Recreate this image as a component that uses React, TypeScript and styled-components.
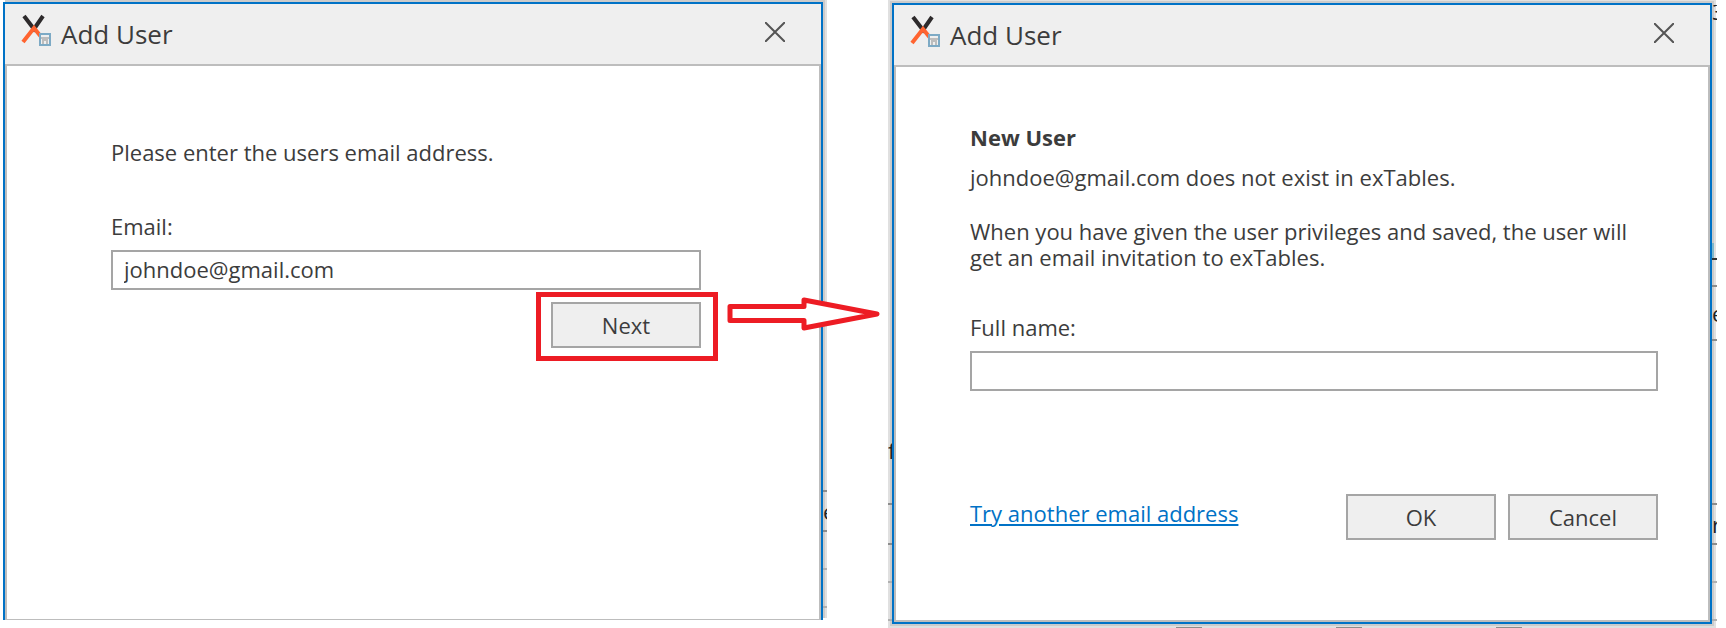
import React from 'react';
import styled, { createGlobalStyle } from 'styled-components';

const Global = createGlobalStyle`
  * { box-sizing: border-box; }
  body { margin: 0; background: #fff; color: #3c3c3c; font: 22px/26px "Open Sans", "Noto Sans", sans-serif; }
`;

const Page = styled.main`
  display: flex;
  align-items: flex-start;
  gap: 69px;
  padding: 2px 14px 5px 3px;
  overflow: hidden;
`;

const Dialog = styled.section<{ $open?: boolean }>`
  position: relative;
  flex: 1 1 0;
  min-width: 0;
  margin-top: ${(p) => (p.$open ? 0 : 1)}px;
  border: 2px solid #0072c6;
  border-bottom-width: ${(p) => (p.$open ? 0 : 2)}px;
  box-shadow: ${(p) =>
    p.$open
      ? '2px -2px 0 #cbcbcb, 4px -2px 0 #e0e0e0'
      : '0 0 0 2px #cbcbcb, 0 0 0 4px #e0e0e0'};
`;

const TitleBar = styled.header`
  display: flex;
  align-items: center;
  height: 60px;
  padding: 0 36px 4px 16px;
  background: #efefef;
`;

const Title = styled.h1`
  flex: 1;
  margin: 4px 0 0 8px;
  font-size: 26px;
  line-height: 32px;
  font-weight: 400;
`;

const CloseButton = styled.button`
  display: flex;
  padding: 0;
  border: 0;
  background: none;
  color: #555;
`;

const Body = styled.form<{ $open?: boolean }>`
  display: flex;
  flex-direction: column;
  border: 2px solid #bdbdbd;
  border-bottom-width: ${(p) => (p.$open ? 1 : 2)}px;
  padding: ${(p) => (p.$open ? '73px 118px 271px 104px' : '57px 50px 80px 74px')};
  background: #fff;
`;

const Heading = styled.h2`
  margin: 0 0 14px;
  font-size: 22px;
  line-height: 26px;
`;

const Text = styled.p<{ $after: number }>`
  margin: 0 0 ${(p) => p.$after}px;
  padding-right: 16px;
`;

const Label = styled.label`
  margin-bottom: 11px;
`;

const Input = styled.input`
  height: 40px;
  padding: 0 11px 3px;
  border: 2px solid #a5a5a5;
  border-radius: 0;
  background: #fff;
  color: inherit;
  font: inherit;
  outline: 0;
`;

const Button = styled.button`
  display: block;
  width: 150px;
  height: 46px;
  padding: 0;
  border: 2px solid #a5a5a5;
  background: #efefef;
  color: inherit;
  font: inherit;
`;

const NextStep = styled.div`
  position: relative;
  align-self: flex-end;
  margin-top: 12px;
`;

const Highlight = styled.span`
  position: absolute;
  inset: -10px -17px -13px -15px;
  border: 5px solid #ed1c24;
  pointer-events: none;
`;

const Arrow = styled.svg`
  position: absolute;
  z-index: 2;
  left: calc(100% + 25px);
  top: -6px;
`;

const Actions = styled.div`
  display: flex;
  align-items: center;
  gap: 12px;
  margin-top: 103px;
`;

const Link = styled.a`
  margin: 0 auto 8px 0;
  color: #0072c6;
  text-decoration-thickness: 2px;
  text-underline-offset: 2px;
`;

/* Sliver of the window behind, visible through the dialog's shadow. */
const Sliver = styled.div<{ $side: 'left' | 'right'; $width: number }>`
  position: absolute;
  top: 0;
  bottom: 0;
  ${(p) => p.$side}: -${(p) => p.$width + 2}px;
  display: flex;
  flex-direction: column;
  width: ${(p) => p.$width}px;
  overflow: hidden;
`;

const SliverRow = styled.div<{ $height: number; $line?: string; $align?: string; $fill?: string }>`
  display: flex;
  flex: none;
  align-items: ${(p) => p.$align ?? 'center'};
  height: ${(p) => p.$height}px;
  border-bottom: 2px solid ${(p) => p.$line ?? '#8c8c8c'};
  background: linear-gradient(90deg, ${(p) => p.$fill ?? 'transparent'} 2px, transparent 2px);
  color: #222;
`;

const faint = '#b0b0b0';

const Ticks = styled.div`
  position: absolute;
  right: 188px;
  bottom: -6px;
  display: flex;
  gap: 134px;
`;

const Tick = styled.i`
  width: 26px;
  height: 1px;
  background: #8c8c8c;
`;

const Logo = () => (
  <svg width="32" height="36" viewBox="0 0 32 36" fill="none" aria-hidden="true">
    <path d="M3 2l10 13L22 2" stroke="#2d2a2b" strokeWidth="4" />
    <path d="M2 28l11-14 8 10" stroke="#ff6430" strokeWidth="4" />
    <path d="M19 20h10v11H19z" fill="#efefef" stroke="#7daac5" strokeWidth="2" />
    <path d="M20 23h8v2h-1v5h-2v-3h-2v3h-2v-5h-1z" fill="#bdbdbd" />
  </svg>
);

const Close = () => (
  <CloseButton type="button" aria-label="Close">
    <svg width="20" height="20" viewBox="0 0 20 20" stroke="currentColor" strokeWidth="2" aria-hidden="true">
      <path d="M0 0l20 20M20 0L0 20" />
    </svg>
  </CloseButton>
);

const Bar = () => (
  <TitleBar>
    <Logo />
    <Title>Add User</Title>
    <Close />
  </TitleBar>
);

export default function App() {
  return (
    <>
      <Global />
      <Page>
        <Dialog $open>
          <Bar />
          <Body $open>
            <Text $after={48}>Please enter the users email address.</Text>
            <Label htmlFor="email">Email:</Label>
            <Input id="email" defaultValue="johndoe@gmail.com" />
            <NextStep>
              <Button type="button">Next</Button>
              <Highlight />
              <Arrow width="154" height="36" viewBox="0 0 154 36" fill="#fff" stroke="#ed1c24" strokeWidth="5" strokeLinejoin="round" aria-hidden="true">
                <path d="M4 10.500h74V4l73 14-73 14v-7.500H4z" />
              </Arrow>
            </NextStep>
          </Body>
          <Sliver $side="right" $width={4} aria-hidden="true">
            <SliverRow $height={488} />
            <SliverRow $height={40}>e</SliverRow>
            <SliverRow $height={38} $line={faint} />
            <SliverRow $height={38} $line={faint} />
          </Sliver>
        </Dialog>
        <Dialog>
          <Sliver $side="left" $width={4} aria-hidden="true">
            <SliverRow $height={460} $line="transparent" $align="flex-end">f</SliverRow>
            <SliverRow $height={40} />
            <SliverRow $height={40} />
            <SliverRow $height={38} $line={faint} />
            <SliverRow $height={38} $line={faint} />
          </Sliver>
          <Bar />
          <Body>
            <Heading>New User</Heading>
            <Text $after={28}>johndoe@gmail.com does not exist in exTables.</Text>
            <Text $after={44}>When you have given the user privileges and saved, the user will get an email invitation to exTables.</Text>
            <Label htmlFor="name">Full name:</Label>
            <Input id="name" />
            <Actions>
              <Link href="#email">Try another email address</Link>
              <Button type="button">OK</Button>
              <Button type="button">Cancel</Button>
            </Actions>
          </Body>
          <Sliver $side="right" $width={5} aria-hidden="true">
            <SliverRow $height={14} $line="transparent">3</SliverRow>
            <SliverRow $height={224} $line="transparent" />
            <SliverRow $height={17} $line="#333" $fill="#7fb8cc" />
            <SliverRow $height={27} />
            <SliverRow $height={54}>e</SliverRow>
            <SliverRow $height={164} />
            <SliverRow $height={40}>r</SliverRow>
            <SliverRow $height={38} $line={faint} />
            <SliverRow $height={38} $line={faint} />
          </Sliver>
          <Ticks aria-hidden="true">
            <Tick />
            <Tick />
            <Tick />
          </Ticks>
        </Dialog>
      </Page>
    </>
  );
}
